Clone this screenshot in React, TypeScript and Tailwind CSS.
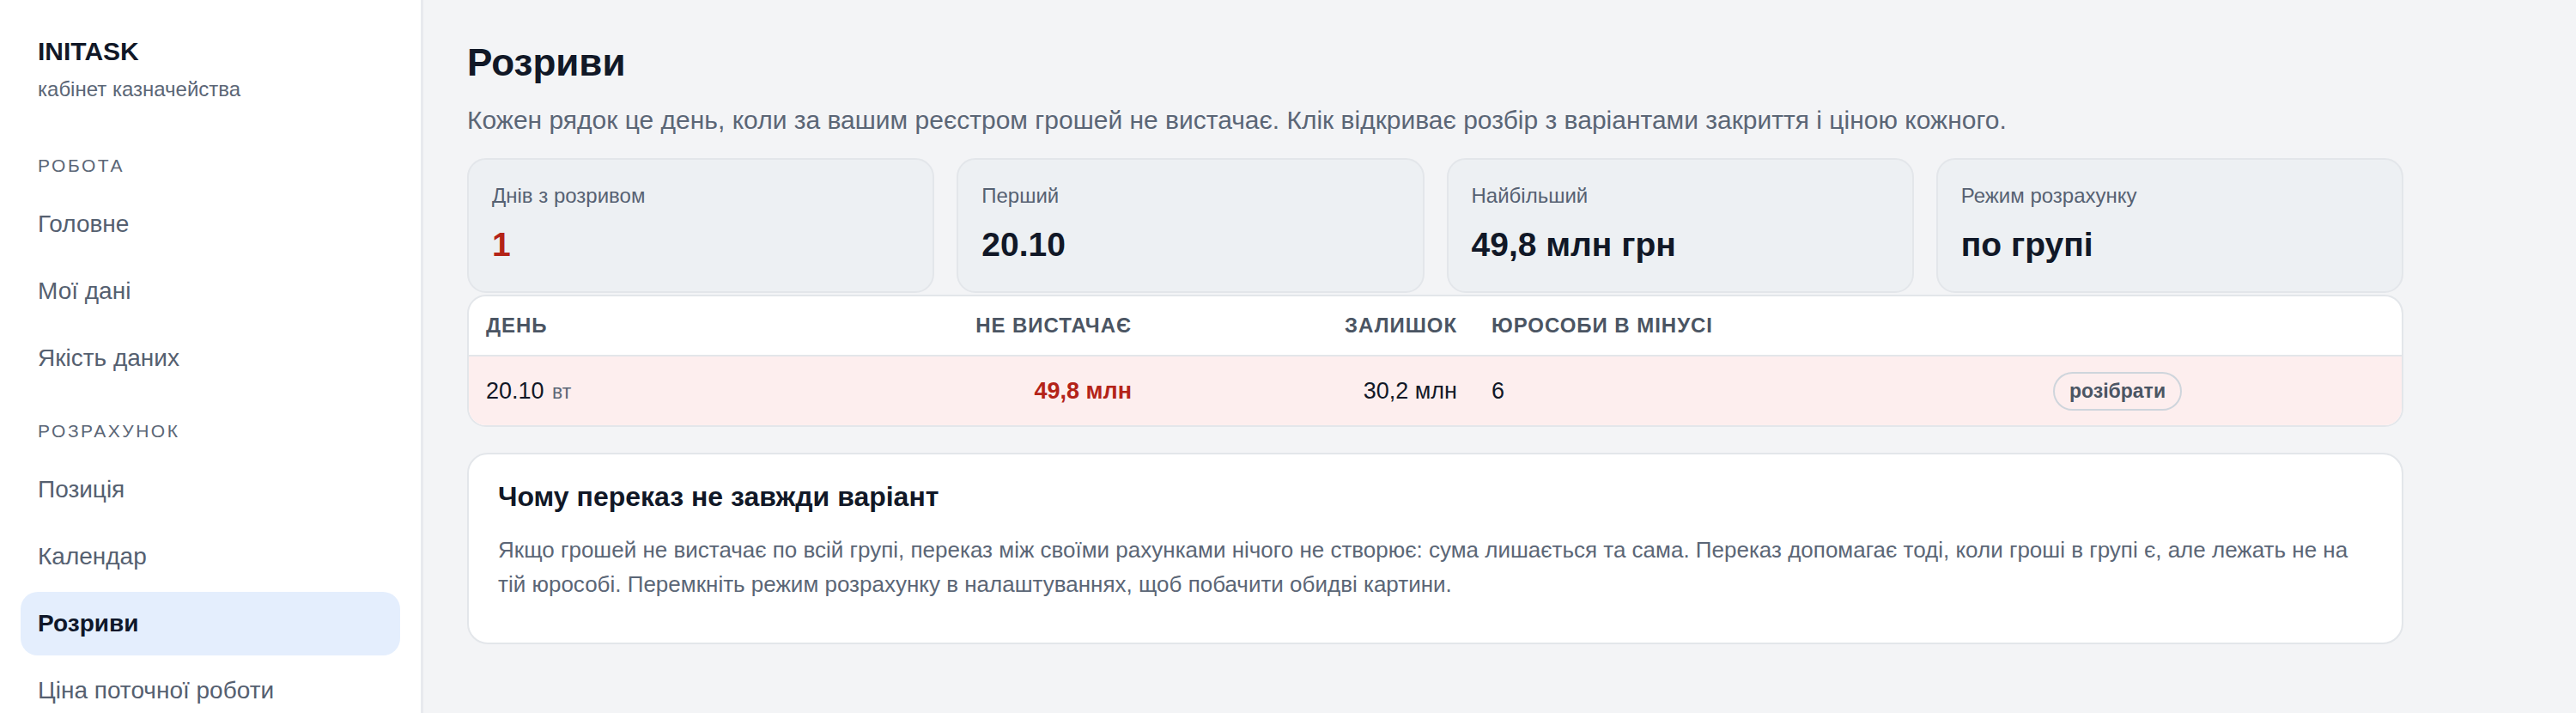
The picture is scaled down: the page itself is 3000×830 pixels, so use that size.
import React from "react";

type NavItem = { label: string; active?: boolean };

const sections: { title: string; items: NavItem[] }[] = [
  { title: "Робота", items: [{ label: "Головне" }, { label: "Мої дані" }, { label: "Якість даних" }] },
  {
    title: "Розрахунок",
    items: [
      { label: "Позиція" },
      { label: "Календар" },
      { label: "Розриви", active: true },
      { label: "Ціна поточної роботи" },
    ],
  },
];

const stats = [
  { label: "Днів з розривом", value: "1", danger: true },
  { label: "Перший", value: "20.10" },
  { label: "Найбільший", value: "49,8 млн грн" },
  { label: "Режим розрахунку", value: "по групі" },
];

const gaps = [{ day: "20.10", weekday: "вт", short: "49,8 млн", balance: "30,2 млн", entities: "6" }];

function Sidebar() {
  return (
    <aside className="flex w-[493px] shrink-0 flex-col border-r-[3px] border-[#e8eaee] bg-white px-[24px] pt-[42px]">
      <div className="px-[20px]">
        <div className="text-[30px] font-bold leading-[36px] text-[#111827]">INITASK</div>
        <div className="mt-[9px] text-[24px] leading-[34px] text-[#5b6676]">кабінет казначейства</div>
      </div>

      <nav className="mt-[24px] flex flex-col">
        {sections.map((s) => (
          <div key={s.title} className="mt-[34px]">
            <div className="px-[20px] text-[21px] uppercase leading-[28px] tracking-[0.12em] text-[#5b6676]">
              {s.title}
            </div>
            <div className="mt-[17px] flex flex-col gap-[4px]">
              {s.items.map((item) => (
                <div
                  key={item.label}
                  className={
                    item.active
                      ? "flex h-[74px] items-center rounded-[20px] bg-[#e4eefd] px-[20px] text-[28px] font-bold leading-[40px] text-[#0f172a]"
                      : "flex h-[74px] items-center rounded-[20px] px-[20px] text-[28px] leading-[40px] text-[#556070]"
                  }
                >
                  {item.label}
                </div>
              ))}
            </div>
          </div>
        ))}
      </nav>
    </aside>
  );
}

function StatCard({ label, value, danger }: { label: string; value: string; danger?: boolean }) {
  return (
    <div className="h-[157px] rounded-[22px] border-2 border-[#e3e6ea] bg-[#edf0f3] px-[27px] pt-[26px]">
      <div className="text-[24px] leading-[32px] text-[#566172]">{label}</div>
      <div
        className={
          danger
            ? "mt-[18px] text-[39px] font-bold leading-[46px] text-[#b42318]"
            : "mt-[18px] text-[39px] font-bold leading-[46px] text-[#111827]"
        }
      >
        {value}
      </div>
    </div>
  );
}

function GapsTable() {
  const cols = "grid grid-cols-[453px_339px_379px_654px_1fr]";
  return (
    <div className="mt-[2px] overflow-hidden rounded-[22px] border-2 border-[#e3e6ea] bg-white">
      <div
        className={`${cols} h-[70px] items-center border-b-2 border-[#e3e6ea] text-[24px] font-bold uppercase leading-[28px] tracking-[0.04em] text-[#4b5563]`}
      >
        <div className="px-[20px]">День</div>
        <div className="px-[20px] text-right">Не вистачає</div>
        <div className="px-[20px] text-right">Залишок</div>
        <div className="px-[20px]">Юрособи в мінусі</div>
        <div />
      </div>
      {gaps.map((g) => (
        <div key={g.day} className={`${cols} h-[80px] items-center bg-[#fdeeee] text-[27px] leading-[36px] text-[#111827]`}>
          <div className="px-[20px]">
            {g.day} <span className="ml-[2px] text-[23px] text-[#5b6676]">{g.weekday}</span>
          </div>
          <div className="px-[20px] text-right font-bold text-[#b42318]">{g.short}</div>
          <div className="px-[20px] text-right">{g.balance}</div>
          <div className="px-[20px]">{g.entities}</div>
          <div className="px-[20px]">
            <button
              type="button"
              className="flex h-[45px] w-[150px] items-center justify-center rounded-full border-2 border-[#cfd5dc] text-[23px] font-bold text-[#4b5563]"
            >
              розібрати
            </button>
          </div>
        </div>
      ))}
    </div>
  );
}

export default function App() {
  return (
    <div className="flex h-[830px] w-full overflow-hidden bg-[#f3f4f6] font-['Liberation_Sans',Arial,sans-serif]">
      <Sidebar />
      <main className="flex-1 pl-[51px] pt-[46px]">
        <div className="w-[2255px]">
          <h1 className="text-[44px] font-bold leading-[53px] text-[#111827]">Розриви</h1>
          <p className="mt-[21px] text-[30px] leading-[40px] text-[#5b6676]">
            Кожен рядок це день, коли за вашим реєстром грошей не вистачає. Клік відкриває розбір з варіантами закриття і
            ціною кожного.
          </p>

          <div className="mt-[24px] grid grid-cols-4 gap-[26px]">
            {stats.map((s) => (
              <StatCard key={s.label} {...s} />
            ))}
          </div>

          <GapsTable />

          <div className="mt-[30px] h-[223px] rounded-[24px] border-2 border-[#e3e6ea] bg-white px-[34px] pt-[30px]">
            <h2 className="text-[32px] font-bold leading-[38px] text-[#111827]">Чому переказ не завжди варіант</h2>
            <p className="mt-[23px] text-[26px] leading-[40px] text-[#5b6676]">
              Якщо грошей не вистачає по всій групі, переказ між своїми рахунками нічого не створює: сума лишається та
              сама. Переказ допомагає тоді, коли гроші в групі є, але лежать не на тій юрособі. Перемкніть режим
              розрахунку в налаштуваннях, щоб побачити обидві картини.
            </p>
          </div>
        </div>
      </main>
    </div>
  );
}
